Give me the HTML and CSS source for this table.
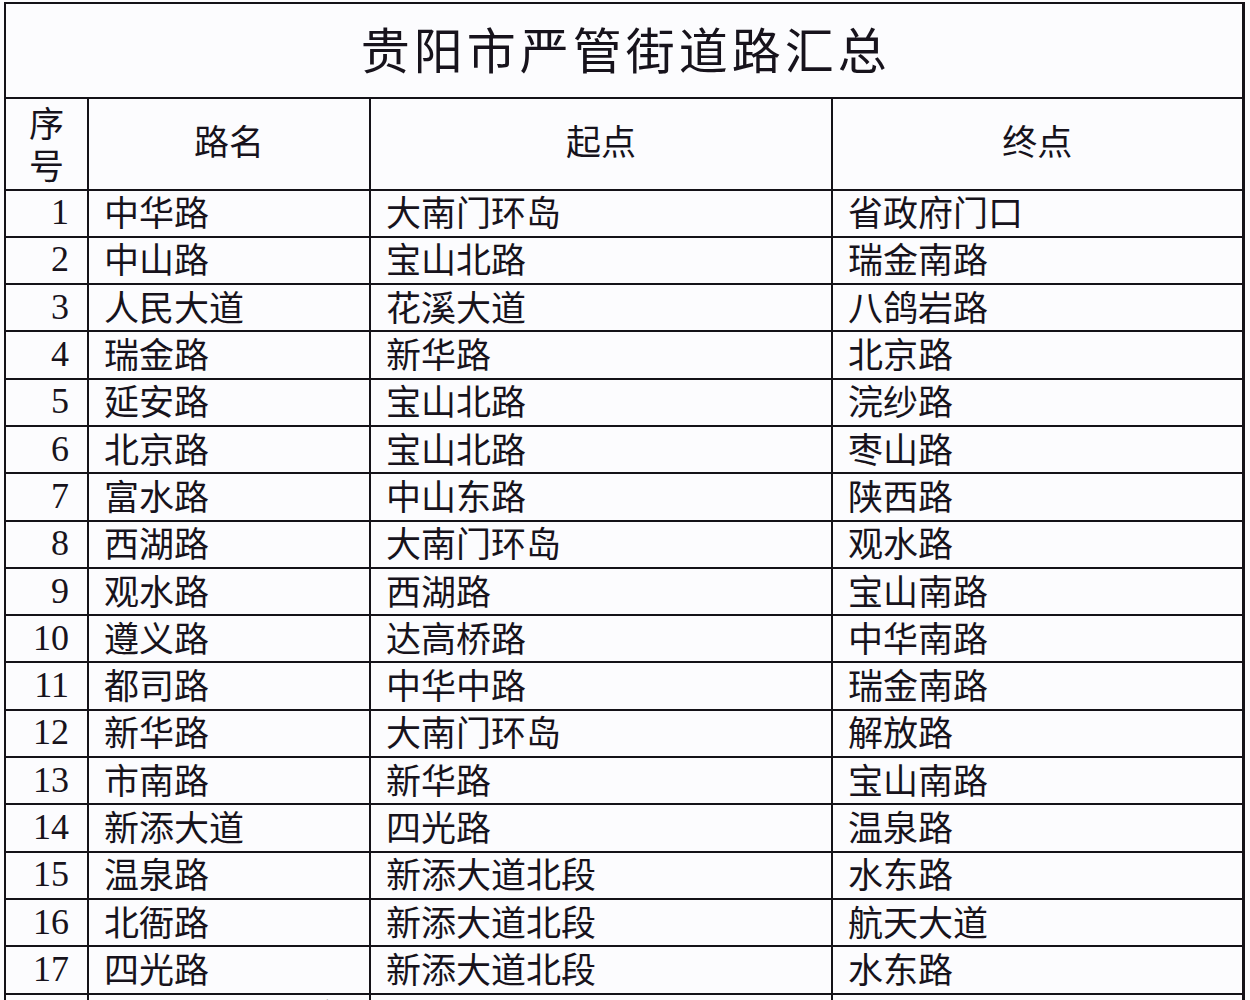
FILE: index.html
```html
<!DOCTYPE html>
<html lang="zh-CN">
<head>
<meta charset="utf-8">
<title>贵阳市严管街道路汇总</title>
<link rel="stylesheet" href="styles.css">
</head>
<body>
<table class="sheet">
  <colgroup>
    <col class="c-no">
    <col class="c-name">
    <col class="c-start">
    <col class="c-end">
  </colgroup>
  <tr class="title-row"><td colspan="4" class="title">贵阳市严管街道路汇总</td></tr>
  <tr class="head-row">
    <td class="head no-head"><span class="stack">序</span><span class="stack">号</span></td>
    <td class="head">路名</td>
    <td class="head">起点</td>
    <td class="head">终点</td>
  </tr>
  <tr><td class="num">1</td><td>中华路</td><td>大南门环岛</td><td>省政府门口</td></tr>
  <tr><td class="num">2</td><td>中山路</td><td>宝山北路</td><td>瑞金南路</td></tr>
  <tr><td class="num">3</td><td>人民大道</td><td>花溪大道</td><td>八鸽岩路</td></tr>
  <tr><td class="num">4</td><td>瑞金路</td><td>新华路</td><td>北京路</td></tr>
  <tr><td class="num">5</td><td>延安路</td><td>宝山北路</td><td>浣纱路</td></tr>
  <tr><td class="num">6</td><td>北京路</td><td>宝山北路</td><td>枣山路</td></tr>
  <tr><td class="num">7</td><td>富水路</td><td>中山东路</td><td>陕西路</td></tr>
  <tr><td class="num">8</td><td>西湖路</td><td>大南门环岛</td><td>观水路</td></tr>
  <tr><td class="num">9</td><td>观水路</td><td>西湖路</td><td>宝山南路</td></tr>
  <tr><td class="num">10</td><td>遵义路</td><td>达高桥路</td><td>中华南路</td></tr>
  <tr><td class="num">11</td><td>都司路</td><td>中华中路</td><td>瑞金南路</td></tr>
  <tr><td class="num">12</td><td>新华路</td><td>大南门环岛</td><td>解放路</td></tr>
  <tr><td class="num">13</td><td>市南路</td><td>新华路</td><td>宝山南路</td></tr>
  <tr><td class="num">14</td><td>新添大道</td><td>四光路</td><td>温泉路</td></tr>
  <tr><td class="num">15</td><td>温泉路</td><td>新添大道北段</td><td>水东路</td></tr>
  <tr><td class="num">16</td><td>北衙路</td><td>新添大道北段</td><td>航天大道</td></tr>
  <tr><td class="num">17</td><td>四光路</td><td>新添大道北段</td><td>水东路</td></tr>
  <tr><td class="num">18</td><td>南垭路　　北段</td><td></td><td></td></tr>
</table>
</body>
</html>
```
FILE: styles.css
```css
html, body {
  margin: 0;
  padding: 0;
  background: #fcfcfe;
}

body {
  padding: 2px 0 0 4px;
}

.sheet {
  border-collapse: collapse;
  table-layout: fixed;
  width: 1238px;
  color: #17131c;
  font-family: "Noto Sans CJK SC", "Noto Sans", sans-serif;
  font-size: 35px;
  line-height: 38px;
  background: #fcfcfe;
  border-right: 3px solid #141218;
}

.c-no { width: 83px; }
.c-name { width: 282px; }
.c-start { width: 462px; }
.c-end { width: 411px; }

.sheet td {
  border: 2px solid #141218;
  padding: 0 0 4px 15px;
  height: 47.3px;
  box-sizing: border-box;
  white-space: nowrap;
  vertical-align: middle;
}

.sheet td.title {
  height: 95px;
  text-align: center;
  font-size: 49px;
  line-height: 56px;
  letter-spacing: 4px;
  padding: 0 0 6px 4px;
}

.sheet td.head {
  height: 91.5px;
  text-align: center;
  padding: 0 0 8px 0;
}

.sheet td.no-head {
  padding: 0 0 2px 0;
}

.stack {
  display: block;
  line-height: 42px;
}

.sheet td.num {
  text-align: right;
  padding: 0 18px 2px 0;
  font-family: "Liberation Serif", "Times New Roman", serif;
  font-size: 36px;
}
```
